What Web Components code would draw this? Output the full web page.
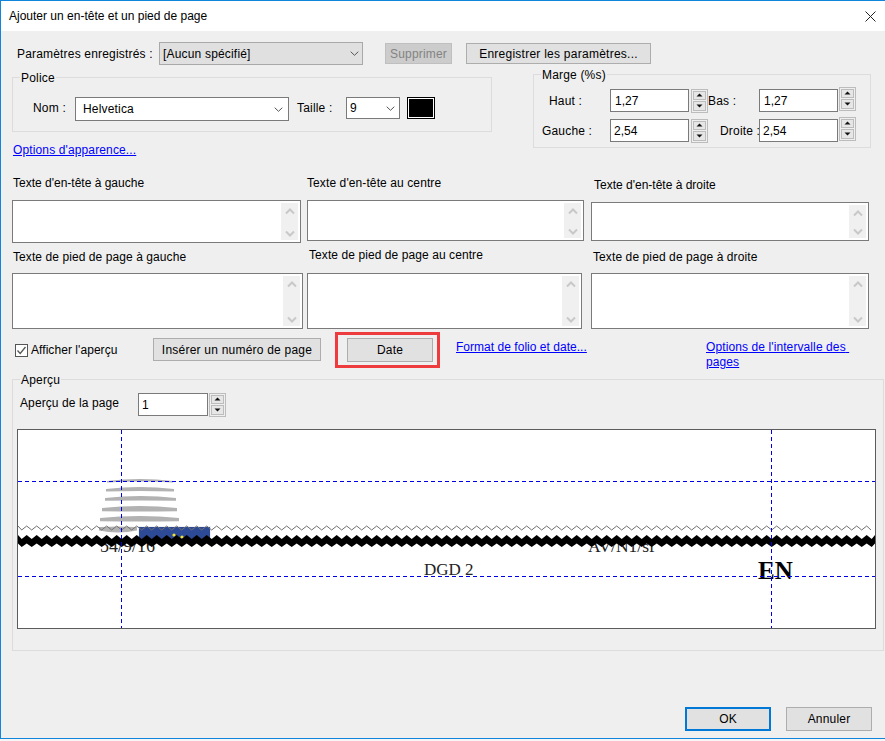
<!DOCTYPE html>
<html lang="fr">
<head>
<meta charset="utf-8">
<title>Ajouter un en-tête et un pied de page</title>
<style>
  html, body { margin: 0; padding: 0; background: #f6f6f6; }
  body { font: 12px "Liberation Sans", Arial, sans-serif; color: #000; }
</style>
</head>
<body>
<hf-dialog></hf-dialog>

<script>
function shadow(el, html) {
  const t = document.createElement('template');
  t.innerHTML = html;
  el.attachShadow({ mode: 'open' }).appendChild(t.content.cloneNode(true));
}

const chevron = `<svg width="9" height="5" viewBox="0 0 9 5"><polyline points=".7,.7 4.5,4.3 8.3,.7" fill="none" stroke="#555" stroke-width="1"/></svg>`;

class HfBtn extends HTMLElement {
  constructor() {
    super();
    shadow(this, `<style>
      :host { display: flex; box-sizing: border-box; align-items: center; justify-content: center; height: 23px;
        background: #e1e1e1; border: 1px solid #adadad; white-space: nowrap; letter-spacing: .18px; }
      :host([disabled]) { background: #ccc; border-color: #bfbfbf; color: #838383; }
      :host([primary]) { border: 2px solid #0078d7; }
    </style><slot></slot>`);
  }
}

class HfCombo extends HTMLElement {
  constructor() {
    super();
    shadow(this, `<style>
      :host { display: flex; box-sizing: border-box; align-items: center; justify-content: space-between; height: 23px;
        background: #fff; border: 1px solid #7a7a7a; padding: 0 4px 0 3px; letter-spacing: .18px; }
      :host([readonly]) { background: #e0e0e0; border-color: #a9a9a9; padding-right: 3px; }
    </style><slot></slot>${chevron}`);
  }
}

class HfField extends HTMLElement {
  constructor() {
    super();
    shadow(this, `<style>
      :host { display: flex; box-sizing: border-box; align-items: center; height: 23px;
        background: #fff; border: 1px solid #7a7a7a; padding: 0 3px 0 4px; }
    </style><slot></slot>`);
  }
}

class HfSpin extends HTMLElement {
  constructor() {
    super();
    shadow(this, `<style>
      :host { display: flex; box-sizing: border-box; flex-direction: column; gap: 1px; width: 17px; height: 24px;
        border: 1px solid #bcbcbc; padding: 1px; background: #efefef; }
      div { flex: 1; display: flex; align-items: center; justify-content: center; background: #e6e6e6; border: 1px solid #bcbcbc; }
      svg { display: block; }
    </style>
    <div><svg width="7" height="4"><polygon points="3.5,.5 6.5,3.5 .5,3.5" fill="#111"/></svg></div>
    <div><svg width="7" height="4"><polygon points=".5,.5 6.5,.5 3.5,3.5" fill="#111"/></svg></div>`);
  }
}

class HfGroup extends HTMLElement {
  constructor() {
    super();
    shadow(this, `<style>
      :host { display: block; box-sizing: border-box; position: relative; border: 1px solid #dcdcdc; }
      .legend { position: absolute; left: 7px; top: -7px; background: #efefef; padding: 0 1px; line-height: 14px; letter-spacing: .18px; }
    </style><span class="legend"></span><slot></slot>`);
    this.shadowRoot.querySelector('.legend').textContent = this.getAttribute('legend');
  }
}

class HfLink extends HTMLElement {
  constructor() {
    super();
    shadow(this, `<style>
      :host { display: block; color: #0000ff; text-decoration: underline; line-height: 15px; letter-spacing: .13px; white-space: pre-wrap; }
    </style><slot></slot>`);
  }
}

// label au-dessus d'une zone de texte vide, les decalages viennent de --head / --pt / --lx
class HfMemo extends HTMLElement {
  constructor() {
    super();
    shadow(this, `<style>
      :host { display: block; }
      .head { box-sizing: border-box; height: var(--head, 26px); padding: var(--pt, 2px) 0 0 var(--lx, 1px); line-height: 14px; letter-spacing: var(--ls, 0); white-space: nowrap; }
      .box { box-sizing: border-box; display: flex; justify-content: flex-end; width: var(--w); height: var(--h); background: #fff; border: 1px solid #7a7a7a; padding: 2px; }
      .bar { width: 17px; display: flex; flex-direction: column; justify-content: space-between; align-items: center; padding: 5px 0 3px; background: #f0f0f0; }
      svg { display: block; }
    </style>
    <div class="head"><slot></slot></div>
    <div class="box"><div class="bar">
      <svg width="10" height="7" viewBox="0 0 10 7"><polyline points="1,5.5 5,1.5 9,5.5" fill="none" stroke="#c8c8c8" stroke-width="2"/></svg>
      <svg width="10" height="7" viewBox="0 0 10 7"><polyline points="1,1.5 5,5.5 9,1.5" fill="none" stroke="#c8c8c8" stroke-width="2"/></svg>
    </div></div>`);
  }
}

class HfCheck extends HTMLElement {
  constructor() {
    super();
    shadow(this, `<style>
      :host { display: flex; align-items: center; gap: 3px; letter-spacing: .06px; white-space: nowrap; }
      svg { display: block; }
    </style>
    <svg width="13" height="13" viewBox="0 0 13 13"><rect x=".5" y=".5" width="12" height="12" fill="#fff" stroke="#555"/><polyline points="2.5,6.5 5.2,9.5 10.5,3" fill="none" stroke="#555" stroke-width="1.3"/></svg>
    <slot></slot>`);
  }
}

class HfPreview extends HTMLElement {
  constructor() {
    super();
    shadow(this, `<style>
      :host { display: block; box-sizing: border-box; background: #fff; border: 1px solid #5c5c5c; overflow: hidden; }
      svg { display: block; width: 100%; height: 100%; }
      text { font-family: "Liberation Serif", "Times New Roman", serif; fill: #222; }
      #logo { filter: blur(.4px); }
    </style>
    <svg viewBox="18 430 857 198">
      <g id="logo" fill="#b2b2b2"></g>
      <rect x="138" y="526" width="73" height="14" fill="#eef0f6"/>
      <rect x="139" y="527" width="71" height="13" fill="#2d4a96"/>
      <circle cx="174" cy="535" r="1.6" fill="#f2e22c"/>
      <circle cx="182" cy="537" r="1.6" fill="#f2e22c"/>
      <text x="100" y="552" font-size="18">54/9/16</text>
      <text x="588" y="552" font-size="17.5">AV/N1/sf</text>
      <text x="424" y="575" font-size="17">DGD 2</text>
      <text x="758" y="579" font-size="25" font-weight="bold" style="fill:#000">EN</text>
      <polyline id="thin" fill="none" stroke="#707070" stroke-width="1"/>
      <polygon id="thick" fill="#000"/>
      <g stroke="#0000e6" stroke-width="1" stroke-dasharray="4 3" fill="none">
        <line x1="18" y1="481.5" x2="875" y2="481.5"/>
        <line x1="18" y1="576.5" x2="875" y2="576.5"/>
        <line x1="121.5" y1="430" x2="121.5" y2="628"/>
        <line x1="771.5" y1="430" x2="771.5" y2="628"/>
      </g>
    </svg>`);
    const root = this.shadowRoot;
    root.getElementById('thin').setAttribute('points', this.zigzag(18, 871, 530, 526).join(' '));
    const upper = this.zigzag(18, 875, 539, 535);
    const lower = this.zigzag(18, 875, 547, 543.5).reverse();
    root.getElementById('thick').setAttribute('points', upper.concat(lower).join(' '));
    // bandes grises du logo : x debut, x fin, y, epaisseur, courbure
    const arcs = [[107, 173, 481, 2.5, 4], [106, 174, 489, 4, 4], [105, 176, 498, 4.5, 4], [102, 177, 508, 5.5, 4], [100, 179, 518, 5.5, 4], [99, 137, 527, 6, 1]];
    root.getElementById('logo').innerHTML = arcs.map(([a, b, y, t, r]) => {
      const m = (a + b) / 2;
      return `<path d="M${a},${y} Q${m},${y - r} ${b},${y} L${b},${y + t * .6} Q${m},${y - r + t * 1.4} ${a},${y + t * .6}Z"/>`;
    }).join('');
  }

  // pointes hautes sur x = 6.7 modulo 10, comme sur la capture
  zigzag(x1, x2, low, high) {
    const pts = [];
    for (let x = x1 - 1.3, i = 0; x <= x2 + 5; x += 5, i++) {
      const px = Math.min(Math.max(x, x1), x2);
      pts.push(px + ',' + (i % 2 ? low : high));
    }
    return pts;
  }
}

class HfTitlebar extends HTMLElement {
  constructor() {
    super();
    shadow(this, `<style>
      :host { display: flex; align-items: center; justify-content: space-between; height: 30px; background: #fff; padding: 0 9px 0 8px; white-space: nowrap; }
      svg { display: block; }
    </style><slot></slot>
    <svg width="11" height="11" viewBox="0 0 11 11"><path d="M.5.5l10 10M10.5.5l-10 10" stroke="#222" stroke-width="1" fill="none"/></svg>`);
  }
}

class HfDialog extends HTMLElement {
  constructor() {
    super();
    shadow(this, `<style>
      :host { display: flex; flex-direction: column; box-sizing: border-box; width: 885px; height: 739px;
        background: #efefef; border-top: 1px solid #0f85dc; border-left: 1px solid #0f85dc; border-bottom: 1px solid #0f85dc; }
      main { flex: 1; display: flex; flex-direction: column; padding: 0 0 7px 11px; }
      span { letter-spacing: .18px; white-space: nowrap; line-height: 14px; }

      .saved { display: flex; align-items: center; margin-top: 11px; height: 23px; }
      .saved span { width: 142px; padding-left: 5px; }

      .top { display: grid; grid-template-columns: 480px 338px; column-gap: 41px; margin-top: 9px; height: 74px; }
      .police { margin-top: 3px; height: 55px; display: flex; align-items: flex-start; padding-top: 19px; box-sizing: border-box; }
      .swatch { width: 28px; height: 22px; box-sizing: border-box; background: #000; border: 1px solid #000; box-shadow: inset 0 0 0 1px #fff; margin-left: 7px; }
      .marge { display: grid; height: 74px; padding-top: 14px; box-sizing: border-box;
        grid-template-columns: 76px 79px 19px 51px 79px 18px; grid-template-rows: 23px 23px; row-gap: 7px; align-items: center; }
      .marge hf-spin { justify-self: end; }
      .marge .up { margin-top: -4px; }

      .memos { display: grid; grid-template-columns: 295px 284px 280px; row-gap: 5px; margin-top: 26px; align-items: start; }

      .actions { display: flex; align-items: flex-start; margin-top: 3px; height: 36px; }
      .actions hf-check { width: 138px; margin: 11px 0 0 3px; }
      .mark { box-sizing: border-box; width: 105px; height: 36px; border: 3px solid #ee3b3e; padding: 3px 4px 0 9px; margin-left: 14px; }

      .apercu { width: 872px; height: 272px; margin-top: 11px; }
      .page { display: flex; align-items: center; margin-top: 13px; height: 23px; }
      .page span { width: 118px; padding: 0 0 3px 7px; letter-spacing: .1px; }

      .buttons { display: flex; margin-top: auto; }
    </style>
    <hf-titlebar>Ajouter un en-tête et un pied de page</hf-titlebar>
    <main>
      <div class="saved">
        <span>Paramètres enregistrés :</span>
        <hf-combo readonly style="width:204px">[Aucun spécifié]</hf-combo>
        <hf-btn disabled style="width:67px;height:21px;margin-left:22px">Supprimer</hf-btn>
        <hf-btn style="width:185px;height:21px;margin-left:14px;letter-spacing:.25px">Enregistrer les paramètres...</hf-btn>
      </div>

      <div class="top">
        <div>
          <hf-group class="police" legend="Police">
            <div style="display:flex">
              <span style="width:42px;padding-left:20px;padding-top:4px">Nom :</span>
              <hf-combo style="width:214px;height:24px;padding:0 5px 0 7px">Helvetica</hf-combo>
              <span style="width:49px;padding-left:8px;padding-top:4px">Taille :</span>
              <hf-combo style="width:54px;height:22px">9</hf-combo>
              <div class="swatch"></div>
            </div>
          </hf-group>
          <hf-link style="margin:11px 0 0 1px">Options d'apparence...</hf-link>
        </div>
        <hf-group class="marge" legend="Marge (%s)">
          <span style="padding-left:15px">Haut :</span>
          <hf-field>1,27</hf-field>
          <hf-spin style="margin-left:2px"></hf-spin>
          <span>Bas :</span>
          <hf-field>1,27</hf-field>
          <hf-spin class="up"></hf-spin>
          <span style="padding-left:8px">Gauche :</span>
          <hf-field style="padding-left:3px">2,54</hf-field>
          <hf-spin style="margin-left:2px"></hf-spin>
          <span style="padding-left:12px">Droite :</span>
          <hf-field style="padding-left:3px">2,54</hf-field>
          <hf-spin class="up"></hf-spin>
        </hf-group>
      </div>

      <div class="memos">
        <hf-memo style="--w:289px;--h:43px">Texte d'en-tête à gauche</hf-memo>
        <hf-memo style="--w:277px;--h:41px;--lx:0px;--ls:.1px">Texte d'en-tête au centre</hf-memo>
        <hf-memo style="--w:278px;--h:39px;--head:28px;--pt:4px;--lx:3px">Texte d'en-tête à droite</hf-memo>
        <hf-memo style="--w:291px;--h:56px;--head:25px;--lx:1px;--ls:.08px">Texte de pied de page à gauche</hf-memo>
        <hf-memo style="--w:275px;--h:56px;--head:25px;--pt:0px;--lx:2px;--ls:.08px">Texte de pied de page au centre</hf-memo>
        <hf-memo style="--w:278px;--h:56px;--head:25px;--lx:2px;--ls:.1px">Texte de pied de page à droite</hf-memo>
      </div>

      <div class="actions">
        <hf-check>Afficher l'aperçu</hf-check>
        <hf-btn style="width:168px;margin-top:6px;letter-spacing:.22px">Insérer un numéro de page</hf-btn>
        <div class="mark"><hf-btn style="width:86px;height:24px">Date</hf-btn></div>
        <hf-link style="margin:8px 0 0 16px;width:140px;letter-spacing:.03px">Format de folio et date...</hf-link>
        <hf-link style="margin:8px 0 0 110px;width:160px;letter-spacing:.1px">Options de l'intervalle des pages</hf-link>
      </div>

      <hf-group class="apercu" legend="Aperçu">
        <div class="page">
          <span>Aperçu de la page</span>
          <hf-field style="width:70px;padding-left:3px">1</hf-field>
          <hf-spin style="margin-left:1px"></hf-spin>
        </div>
        <hf-preview style="width:859px;height:200px;margin:13px 0 0 4px"></hf-preview>
      </hf-group>

      <div class="buttons">
        <hf-btn primary style="width:86px;height:24px;margin-left:673px">OK</hf-btn>
        <hf-btn style="width:86px;height:24px;margin-left:15px">Annuler</hf-btn>
      </div>
    </main>`);
  }
}

customElements.define('hf-btn', HfBtn);
customElements.define('hf-combo', HfCombo);
customElements.define('hf-field', HfField);
customElements.define('hf-spin', HfSpin);
customElements.define('hf-group', HfGroup);
customElements.define('hf-link', HfLink);
customElements.define('hf-memo', HfMemo);
customElements.define('hf-check', HfCheck);
customElements.define('hf-preview', HfPreview);
customElements.define('hf-titlebar', HfTitlebar);
customElements.define('hf-dialog', HfDialog);
</script>
</body>
</html>
